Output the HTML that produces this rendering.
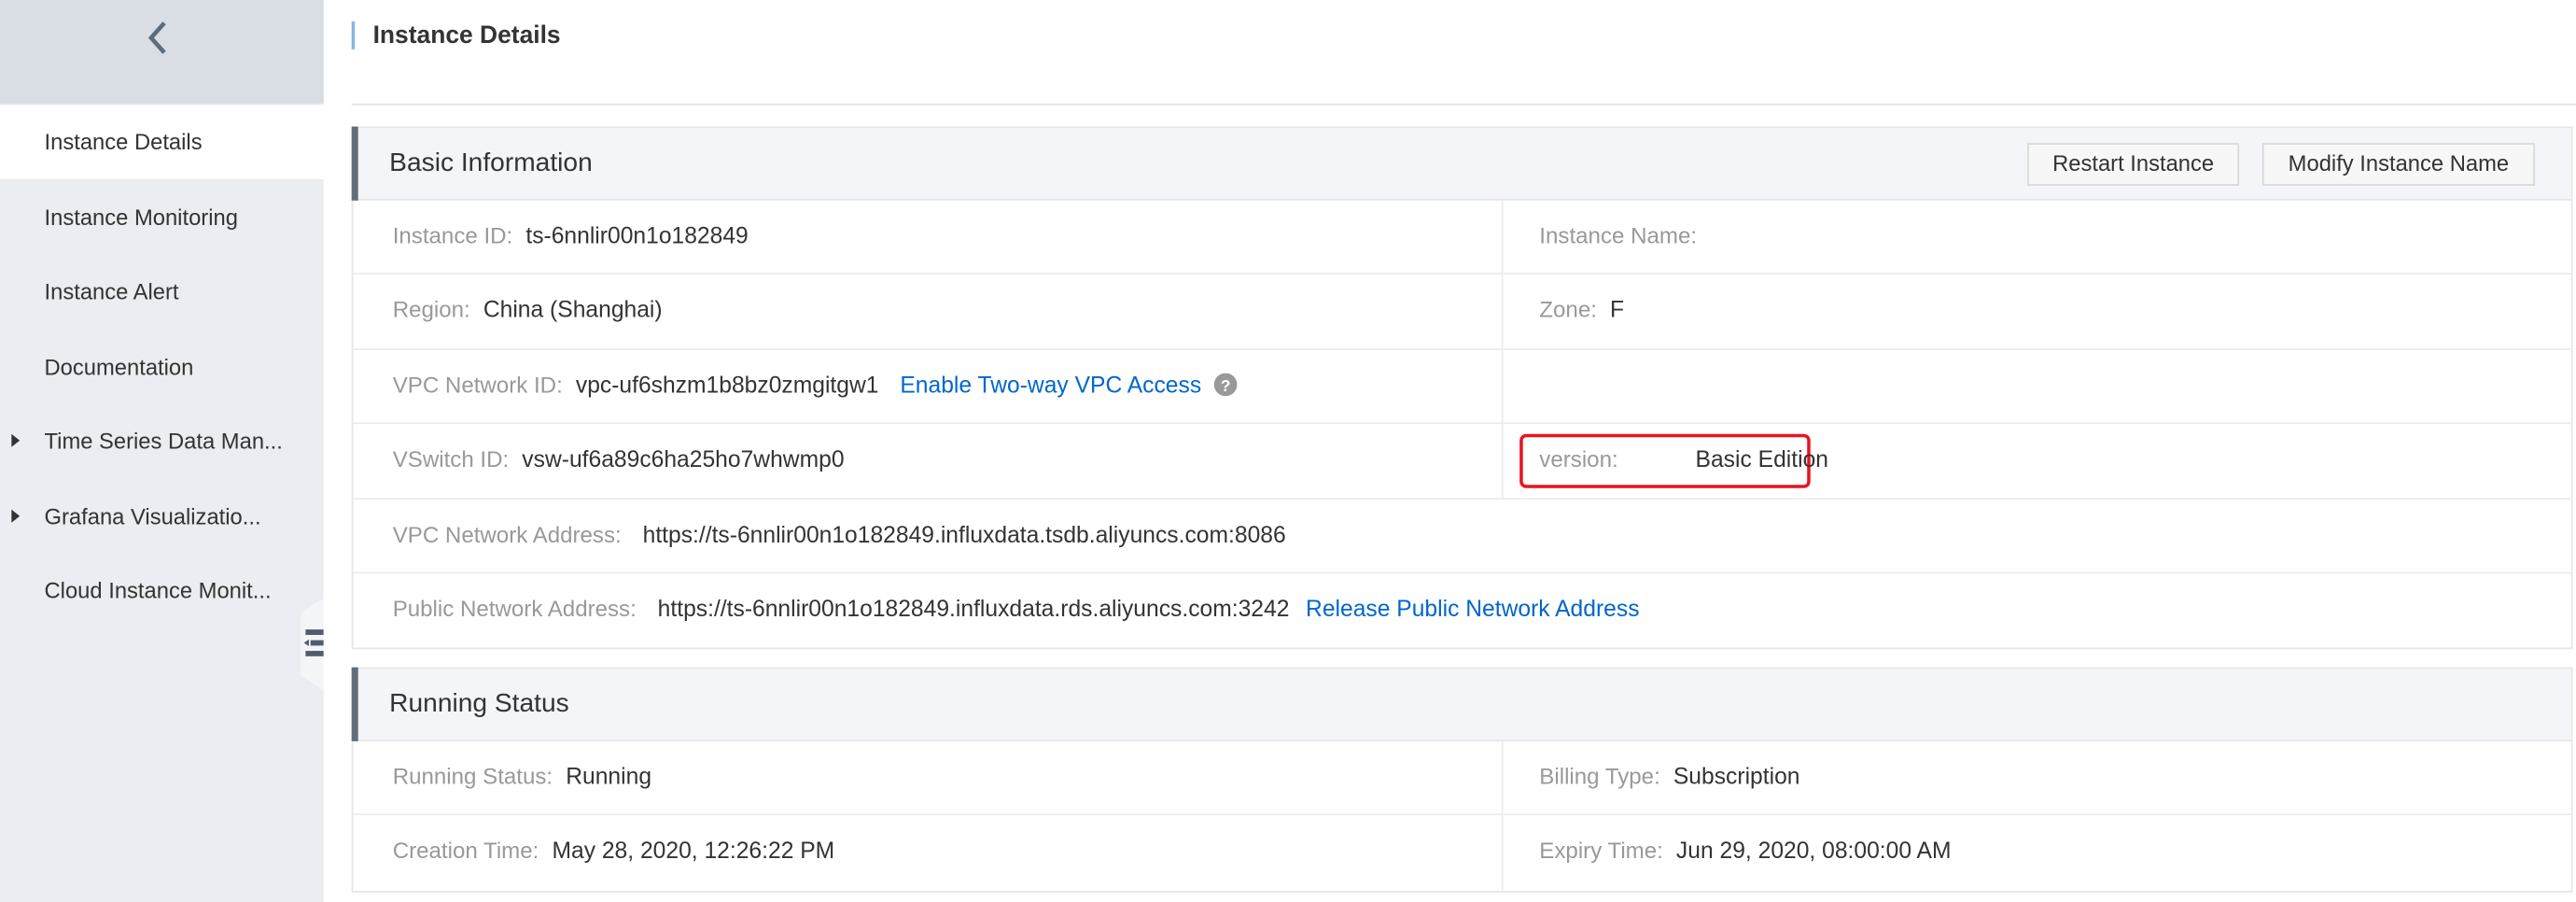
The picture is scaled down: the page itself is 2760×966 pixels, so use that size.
<!DOCTYPE html>
<html><head><meta charset="utf-8"><style>
*{margin:0;padding:0;box-sizing:border-box}
html,body{width:2760px;height:966px;overflow:hidden;background:#fff}
#w{position:absolute;left:0;top:0;width:1568px;height:549px;transform:scale(1.76020);transform-origin:0 0;font-family:"Liberation Sans",Arial,sans-serif;color:#333}
.abs{position:absolute}
#side{left:0;top:0;width:197px;height:549px;background:#eaedf1}
#stop{left:0;top:0;width:197px;height:63px;background:#d9dee5}
.it{position:absolute;left:0;width:197px;height:45px;line-height:45px;padding-left:27px;font-size:13.5px;color:#333;white-space:nowrap}
.tri{position:absolute;left:7px;top:18px;width:0;height:0;border-left:5px solid #333;border-top:4.5px solid transparent;border-bottom:4.5px solid transparent}
.panel{position:absolute;left:214px;width:1352px;border:1px solid #e6e6e6}
.hd{height:44px;background:#f3f5f8;border-bottom:1px solid #e6e6e6;position:relative}
.hd:before{content:"";position:absolute;left:-1px;top:-1px;width:4px;height:45px;background:#646d7a}
.hd span{position:absolute;left:22px;top:13px;font-size:16px;color:#333}
.row{height:45.4px;border-bottom:1px solid #ececec;position:relative;font-size:14px}
.row:last-child{border-bottom:none}
.c{position:absolute;top:-1px;line-height:45px;white-space:nowrap}
.l{color:#999;font-size:13.7px;margin-right:8px}
.l.w{margin-right:13px}
.a{color:#0066cc}
.div{position:absolute;left:699px;top:0;bottom:0;width:1px;background:#ececec}
.btn{position:absolute;top:9px;height:26px;border:1px solid #d9d9d9;background:#f7f7f7;font-size:13.5px;line-height:24px;text-align:center;color:#333}
</style></head><body><div id="w">
<div id="side" class="abs"></div>
<div id="stop" class="abs"><svg class="abs" style="left:88px;top:12px" width="16" height="22" viewBox="0 0 16 22"><path d="M12 2 L4 11 L12 20" fill="none" stroke="#5d6b7d" stroke-width="2.6"/></svg></div>
<div class="it" style="top:64px;background:#fff">Instance Details</div>
<div class="it" style="top:110px">Instance Monitoring</div>
<div class="it" style="top:155px">Instance Alert</div>
<div class="it" style="top:201px">Documentation</div>
<div class="it" style="top:246px"><i class="tri"></i>Time Series Data Man...</div>
<div class="it" style="top:292px"><i class="tri"></i>Grafana Visualizatio...</div>
<div class="it" style="top:337px">Cloud Instance Monit...</div>
<svg class="abs" style="left:183px;top:364px" width="14" height="56"><path d="M14 0 L14 56 L0 47 L0 9 Z" fill="#f4f5f7"/><rect x="3" y="19" width="11" height="3.3" fill="#4f5d70"/><rect x="6" y="25.5" width="8" height="3.3" fill="#4f5d70"/><path d="M2 27.1 L5 25 L5 29.2Z" fill="#4f5d70"/><rect x="3" y="32" width="11" height="3.3" fill="#4f5d70"/></svg>

<div class="abs" style="left:214px;top:13px;width:2px;height:17px;background:#88b7e0"></div>
<div class="abs" style="left:227px;top:13px;font-size:15px;font-weight:bold;color:#333">Instance Details</div>
<div class="abs" style="left:214px;top:63px;width:1354px;height:1px;background:#e3e3e3"></div>

<div class="panel" style="top:77px">
<div class="hd"><span>Basic Information</span>
<div class="btn" style="left:1019px;width:129px">Restart Instance</div>
<div class="btn" style="left:1162px;width:166px">Modify Instance Name</div></div>
<div class="row"><div class="c" style="left:24px"><span class="l">Instance ID:</span>ts-6nnlir00n1o182849</div><div class="div"></div><div class="c" style="left:722px"><span class="l">Instance Name:</span></div></div>
<div class="row"><div class="c" style="left:24px"><span class="l">Region:</span>China (Shanghai)</div><div class="div"></div><div class="c" style="left:722px"><span class="l">Zone:</span>F</div></div>
<div class="row"><div class="c" style="left:24px"><span class="l">VPC Network ID:</span>vpc-uf6shzm1b8bz0zmgitgw1<span class="a" style="margin-left:13px">Enable Two-way VPC Access</span></div><svg class="abs" style="left:524px;top:14px" width="14" height="14"><circle cx="7" cy="7" r="7" fill="#999"/><text x="7" y="11" font-size="10" font-weight="bold" fill="#fff" text-anchor="middle" font-family="Liberation Sans">?</text></svg><div class="div"></div></div>
<div class="row"><div class="c" style="left:24px"><span class="l">VSwitch ID:</span>vsw-uf6a89c6ha25ho7whwmp0</div><div class="div"></div>
<div class="abs" style="left:710px;top:6px;width:177px;height:33px;border:2px solid #e8141f;border-radius:4px"></div>
<div class="c" style="left:722px"><span class="l">version:</span><span style="position:absolute;left:95px">Basic Edition</span></div></div>
<div class="row"><div class="c" style="left:24px"><span class="l w">VPC Network Address:</span>https://ts-6nnlir00n1o182849.influxdata.tsdb.aliyuncs.com:8086</div></div>
<div class="row"><div class="c" style="left:24px"><span class="l w">Public Network Address:</span>https://ts-6nnlir00n1o182849.influxdata.rds.aliyuncs.com:3242<span class="a" style="margin-left:10px">Release Public Network Address</span></div></div>
</div>

<div class="panel" style="top:406px">
<div class="hd"><span>Running Status</span></div>
<div class="row"><div class="c" style="left:24px"><span class="l">Running Status:</span>Running</div><div class="div"></div><div class="c" style="left:722px"><span class="l">Billing Type:</span>Subscription</div></div>
<div class="row"><div class="c" style="left:24px"><span class="l">Creation Time:</span>May 28, 2020, 12:26:22 PM</div><div class="div"></div><div class="c" style="left:722px"><span class="l">Expiry Time:</span>Jun 29, 2020, 08:00:00 AM</div></div>
</div>
</div></body></html>
